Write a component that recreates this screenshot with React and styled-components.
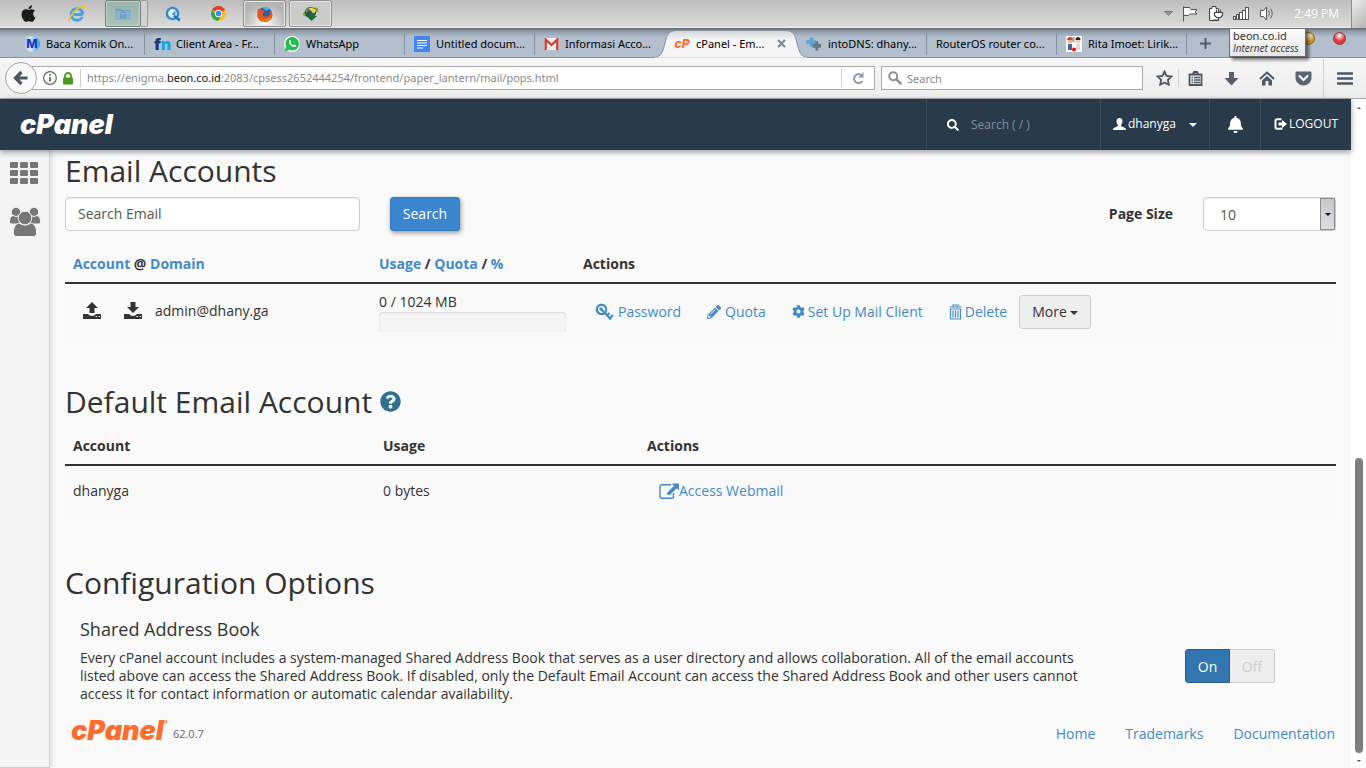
import React, { useState } from 'react';
import styled, { createGlobalStyle, css } from 'styled-components';
import {
  FaApple,
  FaBell,
  FaCog,
  FaInternetExplorer,
  FaPencilAlt,
  FaQuestionCircle,
  FaSearch,
  FaWhatsapp,
} from 'react-icons/fa';

const GlobalStyle = createGlobalStyle`
  * {
    box-sizing: border-box;
  }

  body {
    margin: 0;
    background: #fafafa;
    color: #333;
    font-family: 'Open Sans', 'Noto Sans', sans-serif;
    font-size: 14px;
    line-height: 20px;
  }

  button,
  input,
  select {
    font-family: inherit;
    margin: 0;
  }

  a {
    color: #428bca;
    text-decoration: none;
  }

  svg {
    display: block;
    flex-shrink: 0;
  }
`;

const Screen = styled.div`
  display: flex;
  flex-direction: column;
  min-height: 100vh;
`;

/* ---------- Desktop task bar ---------- */

const TaskBar = styled.div`
  display: flex;
  align-items: stretch;
  height: 28px;
  padding-left: 8px;
  background: linear-gradient(#bdbdbd, #dcdcdc);
  border-bottom: 1px solid #f0f0f0;
`;

const TaskButton = styled.button`
  display: flex;
  align-items: center;
  justify-content: center;
  width: ${(props) => props.$width || 40}px;
  padding: 0;
  border: 1px solid transparent;
  border-radius: 2px;
  background: none;

  ${(props) =>
    props.$open &&
    css`
      margin-right: 3px;
      border-color: #8f8f8f;
      box-shadow: inset 0 0 0 1px #e6e6e6;
      background: ${props.$active ? 'radial-gradient(circle at 50% 100%, #fff, #b4b4b4 70%)' : '#cbcbcb'};
    `}

  ${(props) =>
    props.$hovered &&
    css`
      border-color: #6f7f79;
      box-shadow: inset 0 0 0 1px #c3d2cc;
      background: linear-gradient(#9db3ab, #a9c4b8);
    `}
`;

const TaskStack = styled.div`
  width: 7px;
  margin-right: 5px;
  border: 1px solid #999;
  border-left: 0;
  border-radius: 0 2px 2px 0;
  background: #d2d2d2;
`;

const Tray = styled.div`
  display: flex;
  align-items: center;
  gap: 9px;
  margin-left: auto;
`;

const Clock = styled.span`
  margin: 0 3px 0 11px;
  color: #fff;
  font-size: 12px;
`;

const ShowDesktop = styled.button`
  width: 15px;
  height: 28px;
  padding: 0;
  border: 1px solid #8c8c8c;
  border-width: 0 0 0 1px;
  background: linear-gradient(135deg, #eee, #b5b5b5);
`;

/* ---------- Browser chrome ---------- */

const TabStrip = styled.div`
  position: relative;
  display: flex;
  height: 30px;
  padding-left: 15px;
  border-bottom: 1px solid #8592a3;
  background: linear-gradient(#5f6770, #8e99a6 3px, #b3bfcd 9px, #b3bfcd);
  font-family: 'Noto Sans', sans-serif;
  font-size: 11px;
  color: #000;
`;

const Tab = styled.div`
  position: relative;
  display: flex;
  align-items: center;
  gap: 6px;
  width: 130px;
  padding: 2px 8px 0 9px;
  white-space: nowrap;

  &::after {
    content: '';
    position: absolute;
    top: 5px;
    right: 0;
    width: 1px;
    height: 22px;
    background: ${(props) => (props.$plain ? 'transparent' : '#8592a3')};
  }
`;

const TabTitle = styled.span`
  position: relative;
`;

const ActiveTab = styled(Tab)`
  width: 132px;
  z-index: 1;
`;

const ActiveTabShape = styled.svg`
  position: absolute;
  left: -12px;
  top: 1px;
`;

const TabClose = styled.button`
  position: relative;
  margin-left: auto;
  padding: 0 3px 0 0;
  border: 0;
  background: none;
`;

const NewTab = styled.button`
  width: 38px;
  padding: 2px 0 0 13px;
  border: 0;
  background: none;
`;

const WindowButtons = styled.div`
  position: absolute;
  right: 20px;
  top: 4px;
  display: flex;
  gap: 18px;
`;

const Orb = styled.button`
  width: 13px;
  height: 13px;
  padding: 0;
  border: 1px solid ${(props) => props.$edge};
  border-radius: 50%;
  background: radial-gradient(circle at 50% 25%, #fff, ${(props) => props.$color} 55%);
`;

const NetworkTip = styled.div`
  position: absolute;
  z-index: 2;
  right: 60px;
  top: 0;
  width: 77px;
  height: 29px;
  padding: 0 3px;
  border: 1px solid #6f6f6f;
  background: linear-gradient(#fdfdfd, #e6e6ea);
  box-shadow: 3px 3px 3px rgba(0, 0, 0, 0.5);
  font-size: 11px;
  line-height: 13px;
  color: #333;
  white-space: nowrap;
`;

const TipNote = styled.em`
  display: block;
  font-family: 'Open Sans', sans-serif;
  font-size: 10px;
`;

const NavBar = styled.div`
  display: flex;
  align-items: center;
  height: 41px;
  padding-left: 5px;
  border-bottom: 1px solid #a9a9a9;
  background: linear-gradient(#f6f6f6, #ededed);
  font-family: 'Noto Sans', sans-serif;
`;

const BackButton = styled.button`
  position: relative;
  z-index: 1;
  display: flex;
  align-items: center;
  justify-content: center;
  width: 32px;
  height: 32px;
  padding: 0;
  border: 1px solid #a5a5a5;
  border-radius: 50%;
  background: #f9f9f9;
`;

const UrlBar = styled.div`
  display: flex;
  align-items: center;
  flex: 1;
  height: 24px;
  margin-left: -5px;
  padding-left: 10px;
  border: 1px solid #aaa;
  background: #fff;
  font-size: 11px;
  color: #8a8a8a;
`;

const Url = styled.span`
  flex: 1;
  white-space: nowrap;
`;

const UrlHost = styled.span`
  color: #111;
`;

const Divider = styled.span`
  width: 1px;
  height: ${(props) => props.$height || 18}px;
  margin: 0 ${(props) => props.$gap || 0}px;
  background: #d0d0d0;
`;

const SiteInfo = styled.button`
  display: flex;
  align-items: center;
  gap: 5px;
  padding: 0;
  border: 0;
  background: none;
`;

const IconButton = styled.button`
  display: flex;
  align-items: center;
  justify-content: center;
  width: ${(props) => props.$width || 40}px;
  height: 24px;
  padding: 0;
  border: 0;
  background: none;
`;

const SearchBar = styled.label`
  display: flex;
  align-items: center;
  width: 262px;
  height: 24px;
  margin: 0 7px 0 6px;
  padding-left: 6px;
  border: 1px solid #aaa;
  background: #fff;
`;

const SearchBarInput = styled.input`
  width: 200px;
  margin-left: 5px;
  padding: 0;
  border: 0;
  outline: 0;
  background: none;
  font-size: 11px;

  &::placeholder {
    color: #888;
    opacity: 1;
  }
`;

/* ---------- cPanel page ---------- */

const Viewport = styled.div`
  display: flex;
  flex: 1;
`;

const Page = styled.div`
  display: flex;
  flex-direction: column;
  flex: 1;
  min-width: 0;
`;

const Header = styled.header`
  position: relative;
  z-index: 1;
  display: flex;
  align-items: stretch;
  height: 51px;
  padding-left: 20px;
  background: #293a4a;
  box-shadow: 0 2px 6px rgba(0, 0, 0, 0.4);
  color: #fff;
  font-size: 12px;
`;

const Wordmark = styled.a`
  display: flex;
  align-items: center;
  margin-right: ${(props) => (props.$light ? 'auto' : '5px')};
  color: ${(props) => (props.$light ? '#fff' : '#ff6c2c')};
  font-family: Inter, sans-serif;
  font-size: 27px;
  font-style: italic;
  font-weight: 900;
  line-height: 24px;
`;

const Registered = styled.sup`
  align-self: flex-start;
  font-size: 6px;
  font-weight: 400;
  line-height: 8px;
`;

const HeaderCell = styled.div`
  display: flex;
  align-items: center;
  justify-content: ${(props) => (props.$center ? 'center' : 'flex-start')};
  width: ${(props) => props.$width}px;
  padding-left: ${(props) => props.$pad || 0}px;
  border-left: 1px solid #3a4a59;
`;

const HeaderSearch = styled.input`
  width: 120px;
  margin-left: 12px;
  padding: 0;
  border: 0;
  outline: 0;
  background: none;
  color: #fff;
  font-size: 12px;

  &::placeholder {
    color: #86909a;
    opacity: 1;
  }
`;

const HeaderLink = styled.a`
  display: flex;
  align-items: center;
  gap: 2px;
  padding-bottom: 2px;
  color: #fff;
`;

const Caret = styled.span`
  width: 0;
  height: 0;
  margin: 2px 0 0 ${(props) => props.$gap}px;
  border: 4px solid transparent;
  border-top-color: currentColor;
  border-bottom: 0;
`;

const Body = styled.div`
  display: flex;
  flex: 1;
`;

const Sidebar = styled.nav`
  display: flex;
  flex-direction: column;
  gap: 22px;
  width: 50px;
  padding: 12px 0 0 9px;
  border-right: 1px solid #d5d5d5;
  border-bottom: 1px solid #ccc;
  background: #f4f4f4;
  box-shadow: 2px 0 5px rgba(0, 0, 0, 0.12);
`;

const Main = styled.main`
  flex: 1;
  padding: 4px 15px 0;
`;

const Title = styled.h2`
  display: flex;
  align-items: center;
  gap: 8px;
  margin: 0 0 10px;
  font-size: 30px;
  font-weight: 400;
  line-height: 33px;
`;

const Toolbar = styled.form`
  display: flex;
  align-items: center;
  margin-bottom: 15px;
`;

const SearchEmail = styled.input`
  width: 295px;
  height: 34px;
  padding: 0 12px 2px;
  border: 1px solid #ccc;
  border-radius: 4px;
  background: #fff;
  box-shadow: inset 0 1px 1px rgba(0, 0, 0, 0.08);
  font-size: 14px;

  &::placeholder {
    color: #555;
    opacity: 1;
  }
`;

const SearchButton = styled.button`
  width: 70px;
  height: 34px;
  margin-left: 30px;
  padding: 0 0 2px;
  border: 1px solid #357ebd;
  border-radius: 3px;
  background: #3a87d0;
  box-shadow: 1px 2px 5px rgba(0, 0, 0, 0.4);
  color: #fff;
  font-size: 14px;
`;

const PageSizeLabel = styled.label`
  margin: 0 30px 0 auto;
  font-weight: 700;
`;

const SelectBox = styled.div`
  position: relative;
`;

const PageSize = styled.select`
  display: block;
  width: 133px;
  height: 34px;
  padding: 0 16px;
  border: 1px solid #ccc;
  border-radius: 4px;
  background: #fff;
  box-shadow: inset 0 1px 1px rgba(0, 0, 0, 0.08);
  appearance: none;
  color: #555;
  font-size: 14px;
`;

const SelectArrow = styled.span`
  position: absolute;
  top: 1px;
  right: 1px;
  display: flex;
  align-items: center;
  justify-content: center;
  width: 15px;
  height: 32px;
  border: 1px solid #8c8c8c;
  background: linear-gradient(#c8c6cc, #dedde2);
  color: #111;
  pointer-events: none;

  &::after {
    content: '';
    border: 3px solid transparent;
    border-top-color: currentColor;
    border-bottom: 0;
  }
`;

const Table = styled.table`
  width: 100%;
  margin-bottom: ${(props) => props.$below}px;
  border-collapse: collapse;
  table-layout: fixed;
`;

const Th = styled.th`
  width: ${(props) => (props.$width ? `${props.$width}px` : 'auto')};
  padding: 8px;
  border-bottom: 2px solid #333;
  text-align: left;
  font-weight: 700;
`;

const Td = styled.td`
  height: ${(props) => props.$height || 56}px;
  padding: 0 8px;
  background: #f9f9f9;
`;

const AccountCell = styled.div`
  display: flex;
  align-items: center;
  padding: 0 0 2px 9px;
`;

const TransferButton = styled.button`
  width: 20px;
  margin-right: ${(props) => props.$gap}px;
  padding: 0;
  border: 0;
  background: none;
  color: #333;
`;

const QuotaBar = styled.div`
  width: 187px;
  height: 20px;
  border-radius: 4px;
  background: #f5f5f5;
  box-shadow: inset 0 1px 2px rgba(0, 0, 0, 0.1), inset 0 0 1px rgba(0, 0, 0, 0.1);
`;

const Actions = styled.div`
  display: flex;
  align-items: center;
  gap: 2px;
`;

const ActionLink = styled.a`
  display: flex;
  align-items: center;
  gap: ${(props) => props.$gap || 0}px;
  padding: 0 12px;
  white-space: nowrap;
`;

const MoreButton = styled.button`
  display: flex;
  align-items: center;
  justify-content: center;
  width: 72px;
  height: 34px;
  margin-left: -2px;
  padding: 0;
  border: 1px solid #ccc;
  border-radius: 3px;
  background: #eee;
  color: #333;
  font-size: 14px;
`;

const Option = styled.section`
  display: flex;
  align-items: flex-end;
  padding: 10px 61px 0 15px;
`;

const OptionText = styled.div`
  flex: 1;
  padding-right: 90px;
`;

const OptionTitle = styled.h4`
  margin: 0 0 10px;
  font-size: 18px;
  font-weight: 400;
  line-height: 20px;
`;

const Description = styled.p`
  margin: 0;
  line-height: 18px;
`;

const Toggle = styled.div`
  display: flex;
  margin-bottom: 20px;
`;

const ToggleButton = styled.button`
  width: 45px;
  height: 34px;
  padding: 0;
  border: 1px solid ${(props) => (props.$on ? '#285e8e' : '#ccc')};
  border-left-width: ${(props) => (props.$on ? 1 : 0)}px;
  border-radius: ${(props) => (props.$on ? '3px 0 0 3px' : '0 3px 3px 0')};
  background: ${(props) => (props.$on ? '#3276b1' : '#eee')};
  color: ${(props) => (props.$on ? '#fff' : '#ccc')};
  font-size: 14px;
`;

const Footer = styled.footer`
  display: flex;
  align-items: center;
  height: 56px;
  padding: 0 1px 0 6px;
`;

const Version = styled.span`
  color: #666;
  font-size: 11px;
  padding-top: 6px;
`;

const FooterLinks = styled.nav`
  display: flex;
  gap: 30px;
  margin-left: auto;
  padding-top: 6px;
`;

const ScrollBar = styled.div`
  display: flex;
  flex-direction: column;
  align-items: center;
  justify-content: space-between;
  width: 15px;
  padding: 8px 0 6px;
  background: #fff;
`;

const ScrollThumb = styled.div`
  width: 8px;
  height: 295px;
  margin: auto 0 7px;
  border-radius: 4px;
  background: #7f7f7f;
`;

const ScrollArrow = styled.span`
  border: 2px solid transparent;
  ${(props) => (props.$up ? 'border-bottom-color: #555; border-top: 0;' : 'border-top-color: #555; border-bottom: 0;')}
`;

/* ---------- Favicons made of letters ---------- */

const LetterIcon = styled.span`
  position: relative;
  flex-shrink: 0;
  width: 16px;
  color: ${(props) => props.$color};
  font-family: ${(props) => props.$font || 'Inter, sans-serif'};
  font-size: ${(props) => props.$size}px;
  font-style: ${(props) => (props.$italic ? 'italic' : 'normal')};
  font-weight: 800;
  line-height: 16px;
  text-align: center;
`;

const RingIcon = styled(LetterIcon)`
  height: 16px;
  border-radius: 50%;
  background: linear-gradient(90deg, #b3bfcd, #d9e8f3 40%, #2f9fd8);
`;

const SecondLetter = styled.span`
  color: #13a9e0;
`;

/* ---------- Icons ---------- */

const FolderIcon = () => (
  <svg width="16" height="14" viewBox="0 0 16 14">
    <path d="M0 1.5h6l1 1.5h9V13H0z" fill="#6fa3c4" />
    <path d="M0 4h16v9H0z" fill="#84b3d0" />
    <path d="M5 6.2 8 4.800l3 1.400M5.800 7v3M8 7v3M10.200 7v3M5 10.800h6" stroke="#6595b5" fill="none" />
  </svg>
);

const ExplorerIcon = () => (
  <svg width="18" height="18" viewBox="0 0 18 18">
    <path d="M14.500 9.500H5.500M14.200 12A5.800 5.800 0 1 1 14.800 9.500" fill="none" stroke="#3fa4e8" strokeWidth="2.800" />
    <path d="M1.500 16.500C.2 13 7 3.500 14 1.500c2.500-.7 3 .8 2 3" stroke="#f5c226" strokeWidth="1.600" fill="none" />
  </svg>
);

const QuickTimeIcon = () => (
  <svg width="16" height="16" viewBox="0 0 16 16">
    <circle cx="7.500" cy="7.500" r="5.600" fill="#e9f3fb" stroke="#2f8bd4" strokeWidth="2.400" />
    <path d="m6.500 8.500 4-4-.500 4.500z" fill="#2f8bd4" />
    <path d="M9 9.500q2 3 6 4.800" stroke="#1f78c4" strokeWidth="2.600" fill="none" />
  </svg>
);

const ChromeIcon = () => (
  <svg width="15" height="15" viewBox="0 0 16 16">
    <circle cx="8" cy="8" r="8" fill="#fbc116" />
    <path d="M8 8 1.100 4A8 8 0 0 1 14.900 4z" fill="#e33b2e" />
    <path d="M8 8H4L1.100 4A8 8 0 0 0 7.500 16L11 10z" fill="#2da94f" />
    <circle cx="8" cy="8" r="3.900" fill="#fff" />
    <circle cx="8" cy="8" r="3" fill="#4285f4" />
  </svg>
);

const FirefoxIcon = () => (
  <svg width="16" height="16" viewBox="0 0 16 16">
    <circle cx="8" cy="8" r="7" fill="#2a5ca8" />
    <path d="M5 1.500C8 0 12 1 13 3L9 5z" fill="#4fa8dc" />
    <path d="M1 2.500 3.500 4C5 3.500 7 4.500 8 6L5.500 7.500C6 11 10 11.500 12 9.500c1-1.500.8-3 .5-5C15 6 16 8 15.300 10.500 14 14.500 11 16 8 16 3 16 0 12.500.3 8 .3 6 .5 4 1 2.500z" fill="#e0561b" />
    <path d="M3 11c2 3 7 4 11-1-1 4-4 5.200-6.500 5C5 14.700 3.500 13 3 11z" fill="#f6931d" />
  </svg>
);

const DownloadManagerIcon = () => (
  <svg width="17" height="16" viewBox="0 0 17 16">
    <path d="M1 8c0-2 5-6 10-6.500S17 3 16 5s-6 5.500-10 5.500S1 10 1 8z" fill="#7ba52c" />
    <circle cx="8.500" cy="6.500" r="5.500" fill="#26487a" />
    <path d="M6 2.500c3-1.500 6-.5 8 2L12 8 9 5z" fill="#f0d74a" />
    <path d="m3 3.500 3-1.500.500 3-2 2z" fill="#5aa33a" />
    <path d="M7 7h5l1 3h2l-5.500 5L5 10.500h2.500z" fill="#17732a" />
  </svg>
);

const FlagIcon = () => (
  <svg width="17" height="16" viewBox="0 0 17 16">
    <path d="M1.500.5v15M2 1.500h5.500l1.500 2h6l-2 2.500 2 2H8L6.500 9.500H2" fill="#fff" stroke="#555" />
  </svg>
);

const PlugIcon = () => (
  <svg width="16" height="16" viewBox="0 0 16 16">
    <path d="M1.500 2.500h2.500v-2h4v2h2.500v12h-9z" fill="#fff" stroke="#444" />
    <path d="M8.500 3.500v2.500M12.500 3.500v2.500M6.500 6.500h8v3L12.500 11.500h-4l-2-2zM10.500 11.500v2.500H5" fill="#fff" stroke="#444" strokeWidth="1.200" />
  </svg>
);

const SignalIcon = () => (
  <svg width="17" height="13" viewBox="0 0 17 13">
    <g fill="#fff" stroke="#555">
      <rect x=".5" y="9.500" width="2" height="3" />
      <rect x="3.500" y="7.500" width="2" height="5" />
      <rect x="6.500" y="5.500" width="3" height="7" />
      <rect x="9.500" y="3.500" width="3" height="9" />
      <rect x="12.500" y=".5" width="3" height="12" />
    </g>
  </svg>
);

const SpeakerIcon = () => (
  <svg width="15" height="15" viewBox="0 0 15 15">
    <path d="M1.500 4.500h3L7.500 1v13l-3-3.500h-3z" fill="#fff" stroke="#555" />
    <path d="M9.500 4.500q2 3 0 6M11.500 2.500q3.500 5 0 10" stroke="#666" fill="none" />
  </svg>
);

const DocsIcon = () => (
  <svg width="16" height="16" viewBox="0 0 16 16">
    <rect width="16" height="16" rx="1" fill="#4285f4" />
    <path d="M3 4.500h10M3 7h10M3 9.500h10M3 12h6" stroke="#fff" strokeWidth="1.200" />
  </svg>
);

const GmailIcon = () => (
  <svg width="15" height="12" viewBox="0 0 14 12">
    <rect width="14" height="12" rx="1" fill="#eee" />
    <path d="M1.200 12V1.500L7 7l5.800-5.500V12" stroke="#d6392c" strokeWidth="2.200" fill="none" />
  </svg>
);

const WhatsAppTabIcon = () => (
  <svg width="16" height="16" viewBox="0 0 16 16">
    <circle cx="8" cy="8" r="8" fill="#fff" />
    <circle cx="8.200" cy="7.800" r="6.800" fill="#1fbf4a" />
    <path d="m.8 15.200 1.400-4.500 3 3z" fill="#1fbf4a" />
    <path d="M5.200 4.500c.8-1 1.500-.3 1.800.8.3.8-.5 1-.3 1.500.5 1 1.400 1.900 2.500 2.400.5.200.8-.8 1.400-.6 1.200.5 1.900 1 1.200 1.800C9.500 12.700 3.800 8 5.200 4.500z" fill="#fff" />
  </svg>
);

const DnsIcon = () => (
  <svg width="16" height="16" viewBox="0 0 17 16">
    <path d="M4 1h4v3h3v4H8v3H4V8H0V4h4z" fill="#5ea6d2" />
    <path d="M10 5h3v3h3v4h-3v3h-3v-3H7V8h3z" fill="#6b7680" />
  </svg>
);

const CartoonIcon = () => (
  <svg width="16" height="16" viewBox="0 0 16 16">
    <rect width="16" height="16" fill="#fff" />
    <circle cx="4" cy="5" r="2.500" fill="#e8b894" />
    <path d="M1 4c0-4 6-4 6 0z" fill="#d33" />
    <path d="M2 8h4v6H2z" fill="#3767ad" />
    <path d="M7.500 1v5" stroke="#a99" strokeWidth="2" />
    <circle cx="12" cy="5" r="2.500" fill="#f0cfb0" />
    <path d="M9.500 4c0-4 5-4 5 0z" fill="#222" />
    <path d="M10 8h4v6h-4z" fill="#e5ddd0" />
    <circle cx="8" cy="13.500" r="2" fill="#e11" />
  </svg>
);

const TabShape = () => (
  <ActiveTabShape width="156" height="29" viewBox="0 0 156 29">
    <defs>
      <linearGradient id="tabFill" x1="0" y1="0" x2="0" y2="1">
        <stop offset="0" stopColor="#d2d5d9" />
        <stop offset=".35" stopColor="#f5f5f5" />
      </linearGradient>
    </defs>
    <path
      d="M0 28.500C9 28.500 10 22 12 14S15 1.500 24 1.500H132c9 0 10 5 12 12.500s3 14.500 12 14.500"
      fill="url(#tabFill)"
      stroke="#8592a3"
    />
    <path d="M2 29H154" stroke="#f5f5f5" />
  </ActiveTabShape>
);

const CrossIcon = () => (
  <svg width="9" height="9" viewBox="0 0 9 9">
    <path d="m1 1 7 7M8 1 1 8" stroke="#7f8a96" strokeWidth="2.200" />
  </svg>
);

const PlusIcon = () => (
  <svg width="11" height="11" viewBox="0 0 11 11">
    <path d="M5.500 0v11M0 5.500h11" stroke="#4f5b68" strokeWidth="2" />
  </svg>
);

const BackIcon = () => (
  <svg width="16" height="16" viewBox="0 0 16 16">
    <path d="M14.500 8H4M8.500 2 2.500 8l6 6" stroke="#4a5561" strokeWidth="3.200" fill="none" />
  </svg>
);

const InfoIcon = () => (
  <svg width="14" height="14" viewBox="0 0 14 14">
    <circle cx="7" cy="7" r="6.300" fill="none" stroke="#666" strokeWidth="1.200" />
    <path d="M7 6v4.500M7 3.200v1.600" stroke="#555" strokeWidth="1.600" />
  </svg>
);

const LockIcon = () => (
  <svg width="12" height="13" viewBox="0 0 12 13">
    <path d="M3 6V4a3 3 0 0 1 6 0v2" stroke="#4a9a22" strokeWidth="1.800" fill="none" />
    <rect x="1" y="5.500" width="10" height="7" rx="1" fill="#4a9a22" />
  </svg>
);

const ReloadIcon = () => (
  <svg width="13" height="13" viewBox="0 0 13 13">
    <path d="M10.500 9A4.500 4.500 0 1 1 9 2.800" stroke="#8a97a5" strokeWidth="2" fill="none" />
    <path d="M11.500 0v5.500H6z" fill="#8a97a5" />
  </svg>
);

const LensIcon = () => (
  <svg width="14" height="14" viewBox="0 0 14 14">
    <circle cx="5.200" cy="5.200" r="4" fill="none" stroke="#8f8f8f" strokeWidth="2" />
    <path d="m8.200 8.200 5 5" stroke="#8f8f8f" strokeWidth="2.400" />
  </svg>
);

const StarIcon = () => (
  <svg width="17" height="16" viewBox="0 0 17 16">
    <path d="m8.500 1.500 2.100 4.400 4.900.6-3.600 3.400.9 4.800-4.300-2.300-4.300 2.300.9-4.800L1.500 6.500l4.900-.6z" fill="none" stroke="#4c5763" strokeWidth="1.800" />
  </svg>
);

const ListIcon = () => (
  <svg width="15" height="15" viewBox="0 0 15 15">
    <path d="M1.500 3.500h12v10.500h-12zM5 3l1-2h3l1 2" fill="none" stroke="#4c5763" strokeWidth="1.800" />
    <path d="M3.500 6.500H5M6 6.500h6M3.500 9H5M6 9h6M3.500 11.500H5M6 11.500h6" stroke="#4c5763" strokeWidth="1.300" />
  </svg>
);

const DownIcon = () => (
  <svg width="15" height="15" viewBox="0 0 15 15">
    <path d="M5 1h5v6h4.500l-7 7.500L.5 7H5z" fill="#535f6c" />
  </svg>
);

const HomeIcon = () => (
  <svg width="16" height="15" viewBox="0 0 16 15">
    <path d="m1 8 7-6.500L15 8" fill="none" stroke="#4c5763" strokeWidth="2" />
    <path d="m3 9.500 5-4.500 5 4.500V14.500H9.500V10h-3v4.500H3z" fill="#4c5763" />
  </svg>
);

const PocketIcon = () => (
  <svg width="17" height="15" viewBox="0 0 17 15">
    <path d="M1.500.5h14a1 1 0 0 1 1 1V7c0 4-4 7.500-8 7.500S.5 11 .5 7V1.500a1 1 0 0 1 1-1z" fill="#586470" />
    <path d="m4.500 5 4 4 4-4" stroke="#f5f5f5" strokeWidth="2.200" fill="none" strokeLinecap="round" />
  </svg>
);

const MenuIcon = () => (
  <svg width="16" height="13" viewBox="0 0 16 13">
    <path d="M1 1.500h14M1 6.500h14M1 11.500h14" stroke="#4c5763" strokeWidth="2.600" strokeLinecap="round" />
  </svg>
);

const UserIcon = () => (
  <svg width="13" height="12" viewBox="0 0 13 12">
    <path d="M6.500 0C8.600 0 9.500 1.300 9.500 3.200c0 1.500-.6 2.900-1.400 3.700v1l4 2c.6.400.9 1 .9 2.100H0c0-1.100.3-1.700.9-2.100l4-2v-1C4.100 6.100 3.500 4.700 3.500 3.200 3.500 1.300 4.400 0 6.500 0z" fill="#fff" />
  </svg>
);

const LogoutIcon = () => (
  <svg width="13" height="12" viewBox="0 0 13 12">
    <path d="M7.500 1.200H3a1.500 1.500 0 0 0-1.500 1.500v6.600A1.500 1.500 0 0 0 3 10.800h4.500V9.500" fill="none" stroke="#fff" strokeWidth="2" />
    <path d="M4.500 4.500H8V2l5 4-5 4V7.500H4.500z" fill="#fff" />
  </svg>
);

const AppsIcon = () => (
  <svg width="29" height="23" viewBox="0 0 29 23">
    {[0, 8, 16].map((y) =>
      [1, 11, 21].map((x) => <rect key={`${x}-${y}`} x={x} y={y} width="8" height="6" rx="1" fill="#777" />)
    )}
  </svg>
);

const PeopleIcon = () => (
  <svg width="32" height="30" viewBox="0 0 32 30">
    <g fill="#777" stroke="#f4f4f4" strokeWidth="1">
      <circle cx="7" cy="5" r="4.700" />
      <circle cx="25" cy="5" r="4.700" />
      <path d="M4 8.500q3 2 6 0l2 8.500H3C.5 17 .5 15.500.5 14S1.500 8.500 4 8.500zM28 8.500q-3 2-6 0L20 17h9c2.500 0 2.500-1.500 2.500-3S30.500 8.500 28 8.500z" />
      <path d="M10 16q6 4 12 0c4 1 5.500 5 5.500 9s-1.500 4.500-3.500 4.500H8c-2 0-3.500-.5-3.500-4.500S6 17 10 16z" />
      <circle cx="16" cy="11" r="6.800" />
    </g>
  </svg>
);

const TransferIcon = ({ down }) => (
  <svg width="20" height="18" viewBox="0 0 20 18">
    <path d={down ? 'M7.500 0h5v5H16l-6 6-6-6h3.500z' : 'M10 0l6 6h-3.500v5h-5V6H4z'} fill="currentColor" />
    <path d="M1 12h5q1.500 2 4 2t4-2h5v5H1z" fill="currentColor" />
    <path d="M13.500 14.500H15M16.500 14.500H18" stroke="#f8f8f8" strokeWidth="1.200" />
  </svg>
);

const KeyIcon = () => (
  <svg width="19" height="18" viewBox="0 0 19 18">
    <path d="M10 9.500A4.600 4.600 0 1 1 10.500 4" fill="none" stroke="#428bca" strokeWidth="2" />
    <circle cx="6.500" cy="6.500" r="4.800" fill="none" stroke="#428bca" strokeWidth="2" />
    <circle cx="6" cy="6" r="1.700" fill="#428bca" />
    <path d="M6.500 6.500 16 16.500M12 12.500l2.500-2.500M14.500 15.500l3.500-3.500" stroke="#428bca" strokeWidth="2.200" />
  </svg>
);

const TrashIcon = () => (
  <svg width="13" height="16" viewBox="0 0 13 16">
    <path d="M.5 3h12M4 3V1h5v2M1.500 5h10v10h-10zM4 6.500v7M6.500 6.500v7M9 6.500v7" fill="none" stroke="#428bca" strokeWidth="1.200" />
  </svg>
);

const ExternalIcon = () => (
  <svg width="20" height="16" viewBox="0 0 20 16">
    <path d="M12 1.800H3A2 2 0 0 0 1 3.800v9.400a2 2 0 0 0 2 2h9.500a2 2 0 0 0 2-2V10" fill="none" stroke="#428bca" strokeWidth="1.400" />
    <path d="M12.500.5H20v7l-2.300-2.300L11 12l-3-.5V10l7-7.200z" fill="#428bca" />
  </svg>
);

const DownTriangle = () => (
  <svg width="9" height="6" viewBox="0 0 9 6">
    <path d="M.5.500h8l-4 4z" fill="#999" stroke="#777" />
  </svg>
);

const tabsBefore = [
  { title: 'Baca Komik On...', icon: <RingIcon $size={12} $color="#1437c8">M</RingIcon> },
  {
    title: 'Client Area - Fr...',
    icon: (
      <LetterIcon $size={16} $color="#23356b" $font="'Open Sans', sans-serif">
        f<SecondLetter>n</SecondLetter>
      </LetterIcon>
    ),
  },
  { title: 'WhatsApp', icon: <WhatsAppTabIcon /> },
  { title: 'Untitled docum...', icon: <DocsIcon /> },
  { title: 'Informasi Acco...', icon: <GmailIcon />, plain: true },
];

const tabsAfter = [
  { title: 'intoDNS: dhany...', icon: <DnsIcon /> },
  { title: 'RouterOS router co...' },
  { title: 'Rita Imoet: Lirik...', icon: <CartoonIcon /> },
];

const BrowserTab = ({ tab }) => (
  <Tab $plain={tab.plain}>
    {tab.icon}
    <TabTitle>{tab.title}</TabTitle>
  </Tab>
);

const Desktop = () => (
  <TaskBar>
    <TaskButton aria-label="Start"><FaApple size={19} color="#1c1c1c" /></TaskButton>
    <TaskButton $width={57} aria-label="Internet Explorer"><ExplorerIcon /></TaskButton>
    <TaskButton $width={36} $hovered aria-label="Files"><FolderIcon /></TaskButton>
    <TaskStack />
    <TaskButton aria-label="QuickTime"><QuickTimeIcon /></TaskButton>
    <TaskButton $width={50} aria-label="Chrome"><ChromeIcon /></TaskButton>
    <TaskButton $width={43} $open $active aria-label="Firefox"><FirefoxIcon /></TaskButton>
    <TaskButton $width={43} $open aria-label="Download manager"><DownloadManagerIcon /></TaskButton>
    <Tray>
      <DownTriangle />
      <FlagIcon />
      <PlugIcon />
      <SignalIcon />
      <SpeakerIcon />
      <Clock>2:49 PM</Clock>
      <ShowDesktop aria-label="Show desktop" />
    </Tray>
  </TaskBar>
);

const Browser = () => (
  <>
    <TabStrip>
      {tabsBefore.map((tab) => (
        <BrowserTab key={tab.title} tab={tab} />
      ))}
      <ActiveTab $plain>
        <TabShape />
        <LetterIcon $size={12} $color="#ff6c2c" $italic>cP</LetterIcon>
        <TabTitle>cPanel - Em...</TabTitle>
        <TabClose aria-label="Close tab"><CrossIcon /></TabClose>
      </ActiveTab>
      {tabsAfter.map((tab) => (
        <BrowserTab key={tab.title} tab={tab} />
      ))}
      <NewTab aria-label="New tab"><PlusIcon /></NewTab>
      <WindowButtons>
        <Orb $color="#d99a1c" $edge="#8a6a22" aria-label="Maximize" />
        <Orb $color="#e0383c" $edge="#a03030" aria-label="Close" />
      </WindowButtons>
      <NetworkTip>
        beon.co.id
        <TipNote>Internet access</TipNote>
      </NetworkTip>
    </TabStrip>
    <NavBar>
      <BackButton aria-label="Back"><BackIcon /></BackButton>
      <UrlBar>
        <SiteInfo aria-label="Site information">
          <InfoIcon />
          <LockIcon />
        </SiteInfo>
        <Divider $gap={6} />
        <Url>
          https://enigma.<UrlHost>beon.co.id</UrlHost>:2083/cpsess2652444254/frontend/paper_lantern/mail/pops.html
        </Url>
        <Divider />
        <IconButton $width={32} aria-label="Reload"><ReloadIcon /></IconButton>
      </UrlBar>
      <SearchBar>
        <LensIcon />
        <SearchBarInput placeholder="Search" aria-label="Search the web" />
      </SearchBar>
      <IconButton $width={28} aria-label="Bookmark"><StarIcon /></IconButton>
      <Divider />
      <IconButton $width={32} aria-label="Bookmarks list"><ListIcon /></IconButton>
      <IconButton aria-label="Downloads"><DownIcon /></IconButton>
      <IconButton $width={32} aria-label="Home"><HomeIcon /></IconButton>
      <IconButton aria-label="Pocket"><PocketIcon /></IconButton>
      <Divider $height={38} />
      <IconButton $width={42} aria-label="Menu"><MenuIcon /></IconButton>
    </NavBar>
  </>
);

const App = () => {
  const [pageSize, setPageSize] = useState('10');

  return (
    <Screen>
      <GlobalStyle />
      <Desktop />
      <Browser />
      <Viewport>
        <Page>
          <Header>
            <Wordmark href="#" $light>cPanel</Wordmark>
            <HeaderCell $width={174} $pad={20}>
              <FaSearch size={12} />
              <HeaderSearch placeholder="Search ( / )" aria-label="Search features" />
            </HeaderCell>
            <HeaderCell $width={109} $pad={12}>
              <HeaderLink href="#">
                <UserIcon />
                dhanyga
                <Caret $gap={11} />
              </HeaderLink>
            </HeaderCell>
            <HeaderCell $width={51} $center>
              <FaBell size={17} />
            </HeaderCell>
            <HeaderCell $width={91} $pad={13}>
              <HeaderLink href="#">
                <LogoutIcon />
                LOGOUT
              </HeaderLink>
            </HeaderCell>
          </Header>

          <Body>
            <Sidebar>
              <AppsIcon />
              <PeopleIcon />
            </Sidebar>

            <Main>
              <Title>Email Accounts</Title>
              <Toolbar onSubmit={(e) => e.preventDefault()}>
                <SearchEmail placeholder="Search Email" aria-label="Search Email" />
                <SearchButton type="submit">Search</SearchButton>
                <PageSizeLabel htmlFor="page-size">Page Size</PageSizeLabel>
                <SelectBox>
                  <PageSize id="page-size" value={pageSize} onChange={(e) => setPageSize(e.target.value)}>
                    <option>10</option>
                    <option>20</option>
                    <option>50</option>
                    <option>100</option>
                  </PageSize>
                  <SelectArrow />
                </SelectBox>
              </Toolbar>

              <Table $below={46}>
                <thead>
                  <tr>
                    <Th $width={306}>
                      <a href="#">Account</a> @ <a href="#">Domain</a>
                    </Th>
                    <Th $width={204}>
                      <a href="#">Usage</a> / <a href="#">Quota</a> / <a href="#">%</a>
                    </Th>
                    <Th>Actions</Th>
                  </tr>
                </thead>
                <tbody>
                  <tr>
                    <Td>
                      <AccountCell>
                        <TransferButton $gap={21} aria-label="Upload"><TransferIcon /></TransferButton>
                        <TransferButton $gap={12} aria-label="Download"><TransferIcon down /></TransferButton>
                        admin@dhany.ga
                      </AccountCell>
                    </Td>
                    <Td>
                      0 / 1024 MB
                      <QuotaBar />
                    </Td>
                    <Td>
                      <Actions>
                        <ActionLink href="#" $gap={4}><KeyIcon />Password</ActionLink>
                        <ActionLink href="#" $gap={4}><FaPencilAlt size={14} />Quota</ActionLink>
                        <ActionLink href="#" $gap={3}><FaCog size={13} />Set Up Mail Client</ActionLink>
                        <ActionLink href="#" $gap={3}><TrashIcon />Delete</ActionLink>
                        <MoreButton>
                          More
                          <Caret $gap={3} />
                        </MoreButton>
                      </Actions>
                    </Td>
                  </tr>
                </tbody>
              </Table>

              <Title>
                Default Email Account
                <FaQuestionCircle size={21} color="#31708f" />
              </Title>
              <Table $below={51}>
                <thead>
                  <tr>
                    <Th $width={310}>Account</Th>
                    <Th $width={264}>Usage</Th>
                    <Th>Actions</Th>
                  </tr>
                </thead>
                <tbody>
                  <tr>
                    <Td $height={50}>dhanyga</Td>
                    <Td $height={50}>0 bytes</Td>
                    <Td $height={50}>
                      <ActionLink href="#"><ExternalIcon />Access Webmail</ActionLink>
                    </Td>
                  </tr>
                </tbody>
              </Table>

              <Title>Configuration Options</Title>
              <Option>
                <OptionText>
                  <OptionTitle>Shared Address Book</OptionTitle>
                  <Description>
                    Every cPanel account includes a system-managed Shared Address Book that serves as a user directory
                    and allows collaboration. All of the email accounts listed above can access the Shared Address Book.
                    If disabled, only the Default Email Account can access the Shared Address Book and other users
                    cannot access it for contact information or automatic calendar availability.
                  </Description>
                </OptionText>
                <Toggle>
                  <ToggleButton $on>On</ToggleButton>
                  <ToggleButton>Off</ToggleButton>
                </Toggle>
              </Option>

              <Footer>
                <Wordmark href="#">
                  cPanel<Registered>®</Registered>
                </Wordmark>
                <Version>62.0.7</Version>
                <FooterLinks>
                  <a href="#">Home</a>
                  <a href="#">Trademarks</a>
                  <a href="#">Documentation</a>
                </FooterLinks>
              </Footer>
            </Main>
          </Body>
        </Page>
        <ScrollBar>
          <ScrollArrow $up />
          <ScrollThumb />
          <ScrollArrow />
        </ScrollBar>
      </Viewport>
    </Screen>
  );
};

export default App;
